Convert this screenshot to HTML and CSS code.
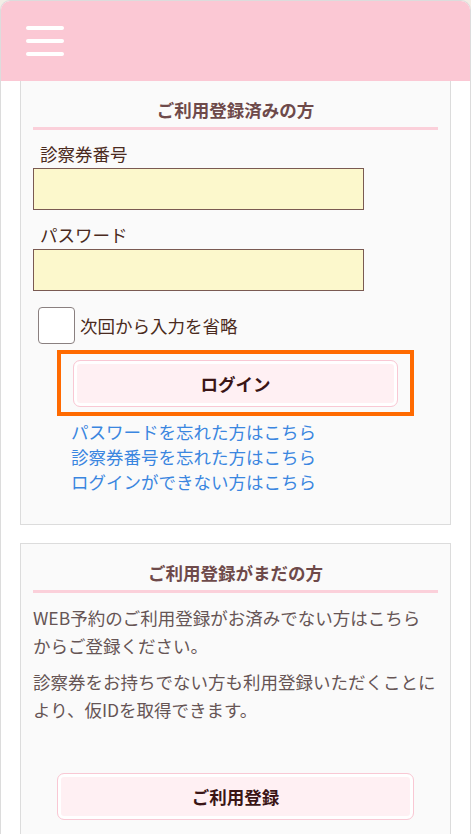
FILE: index.html
```html
<!DOCTYPE html>
<html lang="ja">
<head>
	<meta charset="UTF-8">
	<title>ログイン</title>
	<link rel="stylesheet" href="styles.css">
</head>
<body>
	<div id="wrap">
		<header>
			<div class="menu">
				<span></span>
				<span></span>
				<span></span>
			</div>
		</header>
		<div class="main">
			<div class="box login">
				<h2>ご利用登録済みの方</h2>
				<label class="label" for="card">診察券番号</label>
				<input type="text" id="card" class="text">
				<label class="label" for="pass">パスワード</label>
				<input type="password" id="pass" class="text">
				<p class="remember">
					<input type="checkbox" id="save" class="check">
					<label for="save">次回から入力を省略</label>
				</p>
				<div class="mark">
					<button class="btn btn-login">ログイン</button>
				</div>
				<ul class="links">
					<li><a href="#">パスワードを忘れた方はこちら</a></li>
					<li><a href="#">診察券番号を忘れた方はこちら</a></li>
					<li><a href="#">ログインができない方はこちら</a></li>
				</ul>
			</div>
			<div class="box entry">
				<h2>ご利用登録がまだの方</h2>
				<p class="note">WEB予約のご利用登録がお済みでない方はこちら<br>からご登録ください。</p>
				<p class="note">診察券をお持ちでない方も利用登録いただくことにより、仮IDを取得できます。</p>
				<button class="btn btn-entry">ご利用登録</button>
			</div>
		</div>
	</div>
</body>
</html>
```

FILE: styles.css
```css
*{
	margin: 0;
	padding: 0;
	box-sizing: border-box;
}
body{
	background-color: #f3eee6;
	font-family: "Noto Sans CJK JP", "Noto Sans", sans-serif;
	font-size: 17.5px;
	color: #4a2a20;
}
#wrap{
	width: 471px;
	height: 834px;
	border: 1px solid #dcdcdc;
	border-bottom: none;
	border-radius: 10px 10px 0 0;
	background-color: #fff;
	overflow: hidden;
}
header{
	height: 80px;
	padding: 25px 0 0 25px;
	background-color: #fbc8d4;
}
header .menu{
	display: flex;
	flex-direction: column;
	gap: 9px;
	width: 38px;
}
header .menu span{
	height: 4px;
	border-radius: 2px;
	background-color: #fff;
}
.main{
	padding: 0 19px;
}
.box{
	border: 1px solid #dcdcdc;
	background-color: #fafafa;
	padding: 0 12px;
}
.box h2{
	font-size: 17.5px;
	line-height: 26px;
	font-weight: bold;
	text-align: center;
	color: #6e4a4a;
	padding: 16px 0 4px;
	border-bottom: 3px solid #fbd0da;
}
.login{
	border-top: none;
	padding-bottom: 30px;
}
.login .label{
	display: block;
	line-height: 26px;
	margin: 12px 0 1px 7px;
}
.login h2 + .label{
	margin-top: 11px;
}
.login .text{
	display: block;
	width: 331px;
	height: 42px;
	border: 1px solid #7a5a52;
	background-color: #fcf8cc;
	outline: none;
}
.remember{
	display: flex;
	align-items: center;
	gap: 5px;
	margin: 16px 0 0 5px;
	line-height: 26px;
}
.remember .check{
	appearance: none;
	width: 37px;
	height: 37px;
	border: 1px solid #8a8080;
	border-radius: 4px;
	background-color: #fff;
}
.mark{
	margin: 6px 24px 0;
	padding: 6px 12px 5px;
	border: 4px solid #ff6a00;
}
.btn{
	display: block;
	width: 100%;
	height: 47px;
	border: 1px solid #f9c8d4;
	border-radius: 7px;
	background-color: #fff0f3;
	box-shadow: inset 0 0 0 3px #fff;
	font-family: inherit;
	font-size: 17.5px;
	font-weight: bold;
	color: #3a1515;
}
.links{
	list-style: none;
	margin: 3px 0 0 38px;
}
.links li{
	line-height: 25px;
}
.links a{
	color: #3a86e0;
	text-decoration: none;
}
.entry{
	margin-top: 18px;
	height: 300px;
}
.entry h2{
	padding-top: 16px;
}
.note{
	line-height: 28px;
	color: #665555;
	margin-top: 8px;
}
.entry h2 + .note{
	margin-top: 11px;
}
.btn-entry{
	margin: 49px 24px 0;
	width: 357px;
}
```
